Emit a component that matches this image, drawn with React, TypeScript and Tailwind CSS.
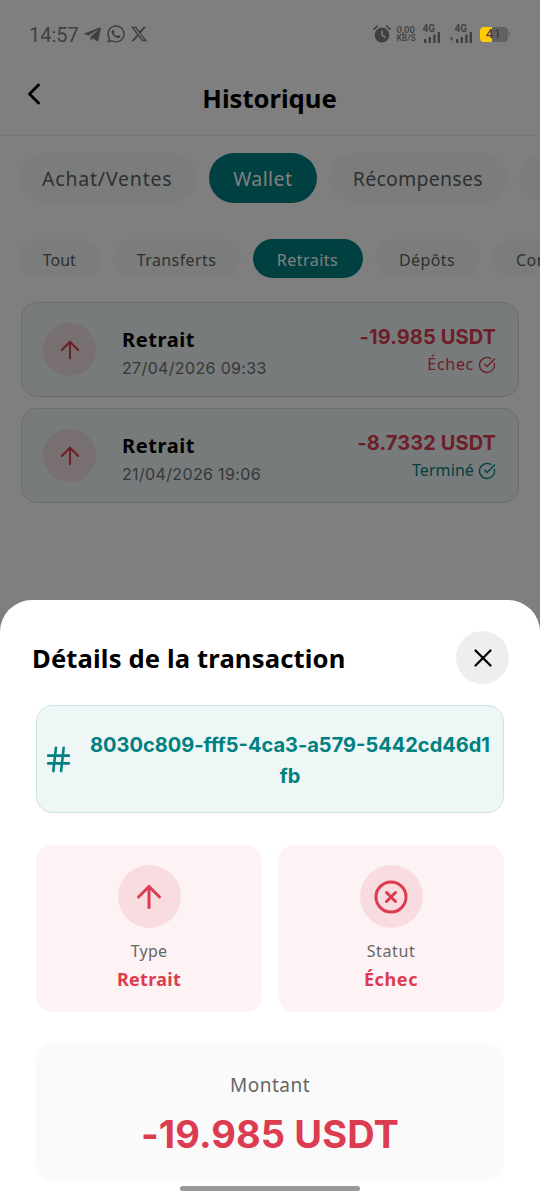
import { ArrowUp, ChevronLeft, CircleCheckBig, CircleX, Hash, X } from "lucide-react";
import type { ReactNode } from "react";
import { FaTelegramPlane, FaWhatsapp } from "react-icons/fa";
import { FaXTwitter } from "react-icons/fa6";

interface ITransaction {
    date: string
    amount: string
    status: string
    statusClass: string
}

const transactions: ITransaction[] = [
    { date: "27/04/2026 09:33", amount: "-19.985 USDT", status: "Échec", statusClass: "text-[#dc3c50] tracking-[0.7px]" },
    { date: "21/04/2026 19:06", amount: "-8.7332 USDT", status: "Terminé", statusClass: "text-[#008080] tracking-[0.1px]" },
]

const walletTabs = [
    { label: "Achat/Ventes", className: "w-[178.5px] tracking-[0.8px]" },
    { label: "Wallet", className: "w-[108.5px] tracking-[0.4px]", active: true },
    { label: "Récompenses", className: "w-[177.5px] tracking-[0.25px]" },
    { label: "", className: "w-[120px]" },
]

const typeTabs = [
    { label: "Tout", className: "w-[82.5px]" },
    { label: "Transferts", className: "w-[128px] tracking-[0.4px]" },
    { label: "Retraits", className: "w-[110px] tracking-[0.5px]", active: true },
    { label: "Dépôts", className: "w-[105px] tracking-[0.4px]" },
    { label: "Conversions", className: "w-[146px] tracking-[0.4px]" },
]

function AlarmIcon() {
    return (<svg width="18" height="18" viewBox="0 0 18 18" fill="none">
        <circle cx="9" cy="10" r="7.4" fill="#404040" />
        <path d="M1 4.2 4.4 1.2M17 4.2l-3.4-3" stroke="#404040" strokeWidth="1.7" strokeLinecap="round" />
        <path d="M9 6v4.2l3 1.9" stroke="#808080" strokeWidth="1.5" strokeLinecap="round" />
    </svg>)
}

function Signal({ arrows = false }: { arrows?: boolean }) {
    return (<div className="flex flex-col">
        <span className={arrows ? "pl-[5px] text-[10px] leading-[8px] font-semibold" : "text-[10px] leading-[8px] font-semibold"}>4G</span>
        <svg width={arrows ? 22 : 17} height="11" viewBox={arrows ? "-5 0 22 11" : "0 0 17 11"} fill="#404040" className="-mt-[1px]">
            <rect x="1" y="7" width="2.4" height="4" rx="0.6" />
            <rect x="5.6" y="5" width="2.4" height="6" rx="0.6" />
            <rect x="10.2" y="2.6" width="2.4" height="8.4" rx="0.6" />
            <rect x="14.6" y="0" width="2.4" height="11" rx="0.6" />
            {arrows && <path d="M-5 7.4-3.3 4.6l1.7 2.8z" />}
            {arrows && <path d="M-5 8.8h3.4l-1.7 2z" opacity="0.35" />}
        </svg>
    </div>)
}

function Battery() {
    return (<div className="flex items-center">
        <div className="flex h-[15px] w-[28px] items-center justify-center rounded-[4px] bg-[linear-gradient(to_right,#ffcc00_12px,#626262_12px)] text-[13.5px] leading-none font-medium">41</div>
        <div className="ml-[1px] h-[4px] w-[1.5px] rounded-r bg-[#626262]" />
    </div>)
}

// stays above the backdrop, so it has its own colours
function StatusBar() {
    return (<div className="relative z-20 flex h-[68px] items-center justify-between pr-[30px] pl-[29px] font-['Roboto',sans-serif] text-[#404040]">
        <div className="flex items-center">
            <span className="mt-[1px] w-[54px] text-[20px]">14:57</span>
            <FaTelegramPlane size={19} className="mr-[4px]" />
            <FaWhatsapp size={20} className="mr-[4px]" />
            <FaXTwitter size={18} />
        </div>
        <div className="flex items-center">
            <AlarmIcon />
            <div className="ml-[6px] flex w-[26px] flex-col text-[9.5px] leading-[9px] font-medium">
                <span>0,00</span>
                <span className="text-[8.5px]">KB/S</span>
            </div>
            <Signal />
            <div className="w-[10px]" />
            <Signal arrows />
            <div className="w-[8px]" />
            <Battery />
        </div>
    </div>)
}

function Pill({ active, className, children }: { active?: boolean, className: string, children: ReactNode }) {
    return (<button className={`shrink-0 rounded-full pt-[2px] whitespace-nowrap ${active ? "bg-[#008080] text-white" : "bg-[#f7fbfb] text-[#606060]"} ${className}`}>
        {children}
    </button>)
}

function TransactionCard({ item }: { item: ITransaction }) {
    return (<div className="flex h-[95px] rounded-2xl border border-[#dad8da] bg-[#eef6f6] pr-[22px] pl-[21px]">
        <div className="mt-[20px] flex size-[53px] items-center justify-center rounded-full bg-[#eedfe0]">
            <ArrowUp size={28} strokeWidth={1.75} color="#dc3c50" />
        </div>
        <div className="mt-[22.5px] ml-[26px] flex-1">
            <p className="text-[20px] leading-7 font-bold tracking-[0.6px] text-black">Retrait</p>
            <p className="font-['Inter',sans-serif] text-[16px] leading-7 tracking-[0.35px] text-[#6c7070]">{item.date}</p>
        </div>
        <div className="mt-[19.5px] flex flex-col items-end">
            <p className="font-['Inter',sans-serif] text-[20px] leading-7 font-bold tracking-[0.1px] text-[#dc3c50]">{item.amount}</p>
            <div className={`flex items-center gap-[4px] text-[16px] leading-7 ${item.statusClass}`}>
                <span className="-mt-[1px]">{item.status}</span>
                <CircleCheckBig size={18} strokeWidth={1.75} className="mt-[2px]" />
            </div>
        </div>
    </div>)
}

function DetailCard({ icon, label, value, labelClass, valueClass }: { icon: ReactNode, label: string, value: string, labelClass: string, valueClass: string }) {
    return (<div className="flex h-[167px] flex-1 flex-col items-center rounded-2xl bg-[#fdf2f4] pt-[20px]">
        <div className="flex size-[63px] items-center justify-center rounded-full bg-[#f9dcdf]">{icon}</div>
        <p className={`mt-[9px] text-[16px] leading-7 text-[#666666] ${labelClass}`}>{label}</p>
        <p className={`text-[18px] leading-7 font-bold text-[#dc3c50] ${valueClass}`}>{value}</p>
    </div>)
}

export default function App() {
    return (<div className="relative flex h-[1200px] w-[540px] flex-col overflow-hidden bg-white font-['Noto_Sans',sans-serif]">
        <StatusBar />

        <header className="flex h-[68px] border-b border-[#eeeeee]">
            <ChevronLeft size={36} strokeWidth={1.9} className="mt-[8px] ml-[16px] text-black" />
            <h1 className="mt-[13px] w-[435px] text-center text-[25.6px] leading-9 font-bold text-black">Historique</h1>
        </header>

        <div className="mt-[17px] ml-[18px] flex h-[50px] gap-3 overflow-hidden text-[19.5px]">
            {walletTabs.map((tab) => <Pill key={tab.label} active={tab.active} className={tab.className}>{tab.label}</Pill>)}
        </div>
        <div className="mt-[36px] ml-[18px] flex h-[39px] gap-3 overflow-hidden text-[16px]">
            {typeTabs.map((tab) => <Pill key={tab.label} active={tab.active} className={tab.className}>{tab.label}</Pill>)}
        </div>

        <div className="mt-[24px] flex flex-col gap-[11px] px-[21px]">
            {transactions.map((item) => <TransactionCard key={item.date} item={item} />)}
        </div>

        <div className="absolute inset-0 z-10 bg-black/50" />

        <section className="absolute inset-x-0 bottom-0 z-20 flex h-[600px] flex-col rounded-t-[32px] bg-white pt-[31px]">
            <div className="flex items-center justify-between pr-[31px] pl-8">
                <h2 className="mt-[4px] text-[25.6px] font-bold tracking-[0.15px] text-black">Détails de la transaction</h2>
                <button className="flex size-[53px] items-center justify-center rounded-full bg-[#eeeeee]">
                    <X size={30} strokeWidth={1.8} color="#000000" />
                </button>
            </div>

            <div className="mx-9 mt-[21px] flex h-[108px] items-center rounded-2xl border-[1.5px] border-[#cfe4e4] bg-[#eef6f6] pl-[6px] text-[#008080]">
                <Hash size={31} strokeWidth={2} />
                <p className="mt-[4px] ml-[13px] w-[406px] text-center font-['Inter',sans-serif] text-[20px] leading-[31px] font-bold break-all">8030c809-fff5-4ca3-a579-5442cd46d1fb</p>
            </div>

            <div className="mx-9 mt-8 flex gap-4">
                <DetailCard icon={<ArrowUp size={36} color="#dc3c50" />} label="Type" value="Retrait" labelClass="tracking-[0.2px]" valueClass="tracking-[0.3px]" />
                <DetailCard icon={<CircleX size={36} color="#dc3c50" />} label="Statut" value="Échec" labelClass="tracking-[0.6px]" valueClass="tracking-[0.6px]" />
            </div>

            <div className="mx-9 mt-8 flex h-[136px] flex-col items-center rounded-2xl bg-[#fafafa] pt-[25px]">
                <p className="text-[19px] leading-8 tracking-[0.5px] text-[#666666]">Montant</p>
                <p className="mt-[9px] font-['Inter',sans-serif] text-[38px] leading-[48px] font-bold tracking-[0.1px] text-[#dc3c50]">-19.985 USDT</p>
            </div>

            <div className="mx-auto mt-[6px] h-[5px] w-[180px] rounded-full bg-[#999999]" />
        </section>
    </div>)
}
